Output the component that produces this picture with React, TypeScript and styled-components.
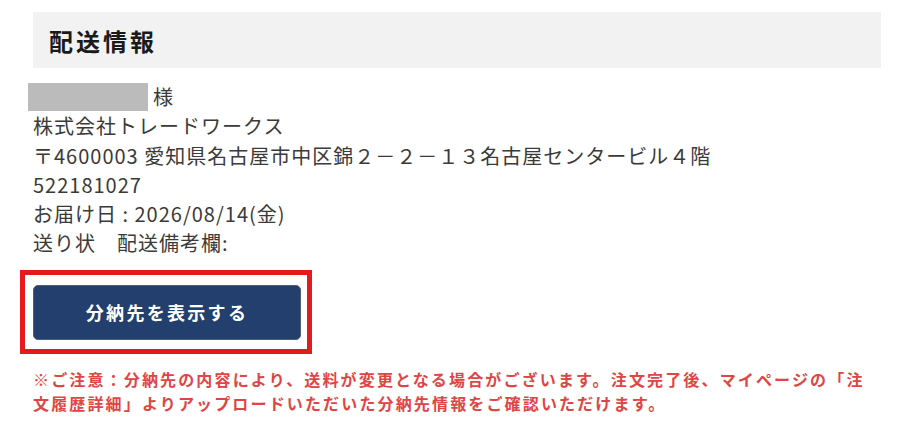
import styled, { createGlobalStyle } from 'styled-components'

const GlobalStyle = createGlobalStyle`
  body {
    margin: 0;
    background: #ffffff;
    font-family: "Noto Sans CJK JP", "Noto Sans", sans-serif;
    color: #333333;
  }
`

const Page = styled.div`
  width: 900px;
  height: 428px;
  box-sizing: border-box;
  padding: 12px 19px 0 33px;
  overflow: hidden;
`

const SectionHeader = styled.div`
  height: 56px;
  display: flex;
  align-items: center;
  padding-left: 16px;
  background: #f2f2f2;
`

const SectionTitle = styled.h2`
  margin: 0;
  font-size: 24px;
  font-weight: 700;
  letter-spacing: 3px;
  color: #1a1a1a;
`

const Address = styled.div`
  margin-top: 14px;
  font-size: 20px;
  line-height: 29.3px;
  letter-spacing: 1px;
  color: #3a3a3a;
`

const Line = styled.div`
  display: flex;
  align-items: center;
  white-space: nowrap;
`

const Masked = styled.span`
  display: inline-block;
  width: 120px;
  height: 28px;
  margin-left: -5px;
  margin-right: 5px;
  background: #bbbbbb;
`

const Highlight = styled.div`
  display: inline-block;
  margin: 12px 0 0 -13px;
  padding: 10px 6px 9px 8px;
  border: 5px solid #e31b1b;
`

const SplitButton = styled.button`
  display: block;
  width: 268px;
  height: 55px;
  border: 1px solid #4b5f80;
  border-radius: 5px;
  background: #223f6d;
  color: #ffffff;
  font-family: inherit;
  font-size: 18px;
  font-weight: 700;
  letter-spacing: 2.3px;
  cursor: pointer;
`

const Notice = styled.p`
  margin: 13px 0 0;
  font-size: 16px;
  font-weight: 700;
  line-height: 24px;
  letter-spacing: 2.15px;
  color: #e04444;
`

const App = () => {
  return (
    <>
      <GlobalStyle />
      <Page>
        <SectionHeader>
          <SectionTitle>配送情報</SectionTitle>
        </SectionHeader>
        <Address>
          <Line>
            <Masked />様
          </Line>
          <Line>株式会社トレードワークス</Line>
          <Line>〒4600003 愛知県名古屋市中区錦２－２－１３名古屋センタービル４階</Line>
          <Line>522181027</Line>
          <Line>お届け日 : 2026/08/14(金)</Line>
          <Line>送り状　配送備考欄:</Line>
        </Address>
        <Highlight>
          <SplitButton>分納先を表示する</SplitButton>
        </Highlight>
        <Notice>
          ※ご注意：分納先の内容により、送料が変更となる場合がございます。注文完了後、マイページの「注文履歴詳細」よりアップロードいただいた分納先情報をご確認いただけます。
        </Notice>
      </Page>
    </>
  )
}

export default App
